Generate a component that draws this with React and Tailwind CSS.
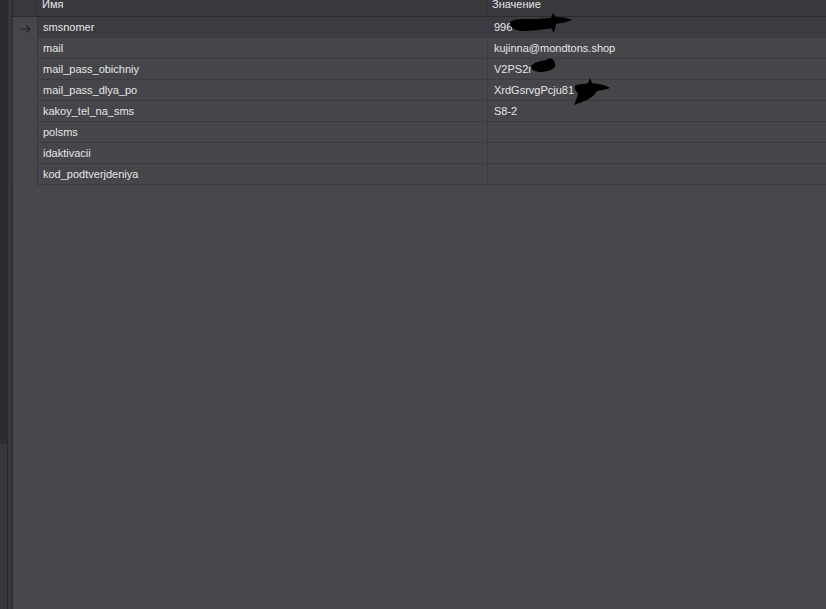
const ROWS = [
  { name: 'smsnomer', value: '996', blot: 'a' },
  { name: 'mail', value: 'kujinna@mondtons.shop' },
  { name: 'mail_pass_obichniy', value: 'V2PS2r', blot: 'b' },
  { name: 'mail_pass_dlya_po', value: 'XrdGsrvgPcju81', blot: 'c' },
  { name: 'kakoy_tel_na_sms', value: 'S8-2' },
  { name: 'polsms', value: '' },
  { name: 'idaktivacii', value: '' },
  { name: 'kod_podtverjdeniya', value: '' },
];

// black marker scribbles that hide part of the values
function Blot({ kind }) {
  if (kind === 'a') {
    return (
      <svg className="absolute left-[21px] top-[-4px]" width="64" height="22" viewBox="0 0 64 22">
        <path
          d="M1 9 C6 5 16 6 28 6 L42 5 L44 0 L47 4 C53 4 60 5 63 7 C58 9 52 10 47 11 L45 20 L42 15 C34 17 22 18 12 18 C5 17 0 14 1 9 Z"
          fill="#000"
        />
      </svg>
    );
  }
  if (kind === 'b') {
    return (
      <svg className="absolute left-[42px] top-[-1px]" width="26" height="15" viewBox="0 0 26 15">
        <path d="M1 8 C4 4 11 3 16 2 L20 0 C24 1 26 5 25 9 C23 12 16 14 9 14 C4 13 0 11 1 8 Z" fill="#000" />
      </svg>
    );
  }
  if (kind === 'c') {
    return (
      <svg className="absolute left-[83px] top-[-2px]" width="40" height="28" viewBox="0 0 40 28">
        <path
          d="M4 8 C8 5 13 7 17 5 L19 0 L21 5 C27 6 35 7 39 10 C34 12 29 12 26 13 L23 17 C19 21 12 24 3 27 C5 22 7 18 7 15 C4 13 3 10 4 8 Z"
          fill="#000"
        />
      </svg>
    );
  }
  return null;
}

function RowArrow() {
  return (
    <svg width="11" height="8" viewBox="0 0 11 8">
      <path d="M0.5 4 H10 M6.5 0.5 L10 4 L6.5 7.5" fill="none" stroke="#242328" strokeWidth="1.1" />
    </svg>
  );
}

export default function App() {
  return (
    <div
      className="flex h-[609px] w-[826px] overflow-hidden bg-[#48474c] text-[11px] text-[#e6e6e8]"
      style={{ fontFamily: '"Liberation Sans", Arial, sans-serif' }}
    >
      {/* left edge strips */}
      <div className="flex w-[7px] shrink-0 flex-col">
        <div className="h-[444px] bg-[#2c2b30]" />
        <div className="flex-1 bg-[#37363b]" />
      </div>
      <div className="w-px shrink-0 bg-[#28272c]" />
      <div className="w-[4px] shrink-0 bg-[#38373c]" />
      <div className="w-px shrink-0 bg-[#2a292e]" />

      <div className="flex min-w-0 flex-1 flex-col">
        {/* column header, scrolled so its top is clipped */}
        <div className="flex h-[17px] shrink-0 overflow-hidden border-b border-[#2c2b30] bg-[#3a393e]">
          <div className="w-[24px] shrink-0 border-r border-[#2f2e33]" />
          <div className="-mt-[4px] w-[450px] shrink-0 border-r border-[#2f2e33] pl-[5px] leading-[17px]">Имя</div>
          <div className="-mt-[4px] flex-1 pl-[5px] leading-[17px]">Значение</div>
        </div>

        {ROWS.map((r, i) => (
          <div
            key={r.name}
            className={'flex h-[21px] shrink-0 ' + (i === 0 ? 'bg-[#3c3b41]' : 'bg-[#46454a]')}
          >
            <div className="flex w-[24px] shrink-0 items-center justify-center bg-[#47464b] pl-[1px] pt-[2px]">
              {i === 0 && <RowArrow />}
            </div>
            <div className="w-px shrink-0 bg-[#38373c]" />
            <div className="w-[450px] shrink-0 border-b border-r border-[#3b3a3f] pl-[5px] pt-[2px] leading-[17px]">
              {r.name}
            </div>
            <div className="relative flex-1 border-b border-[#3b3a3f] pl-[6px] pt-[2px] leading-[17px]">
              {r.value}
              {r.blot && <Blot kind={r.blot} />}
            </div>
          </div>
        ))}
      </div>
    </div>
  );
}
